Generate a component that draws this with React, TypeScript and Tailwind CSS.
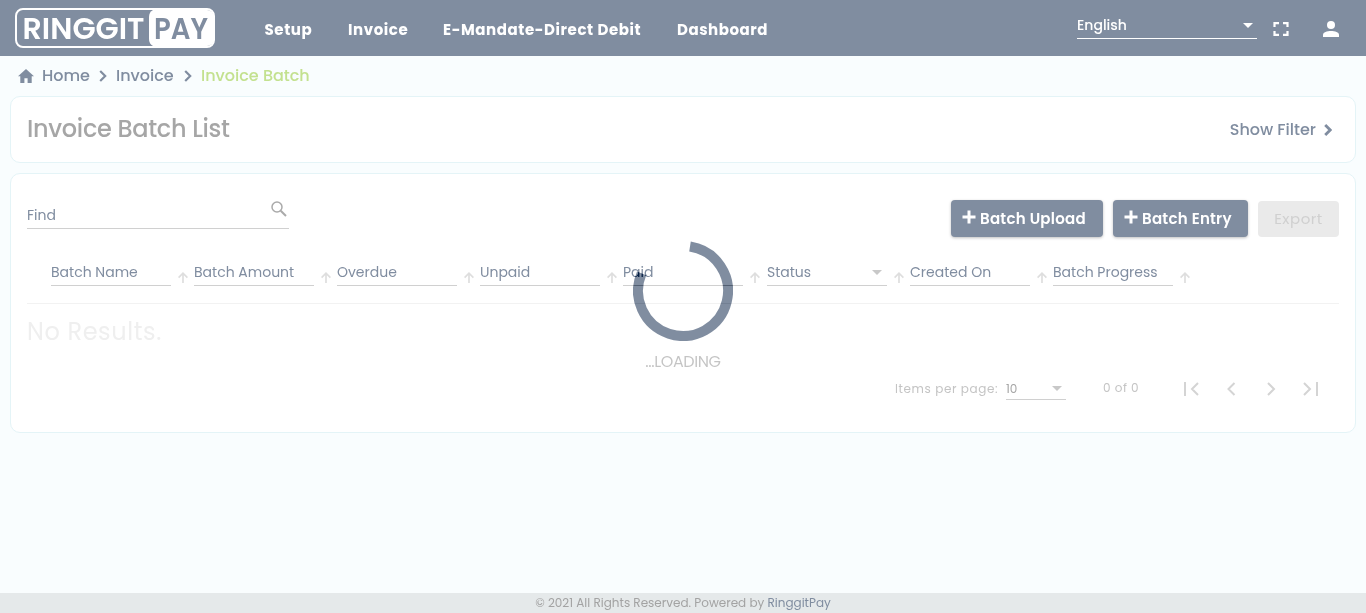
import React from "react";

const columns = [
  { label: "Batch Name" },
  { label: "Batch Amount" },
  { label: "Overdue" },
  { label: "Unpaid" },
  { label: "Paid", wide: true },
  { label: "Status", select: true },
  { label: "Created On" },
  { label: "Batch Progress" },
];

function Logo() {
  return (
    <svg width="200" height="40" viewBox="0 0 200 40" className="shrink-0">
      <rect x="1" y="1" width="198" height="38" rx="7" fill="none" stroke="#fff" strokeWidth="2" />
      <path d="M138 2H192a7 7 0 0 1 7 7V31a7 7 0 0 1-7 7H138Q134 36 134 31V9Q134 4 138 2Z" fill="#fff" />
      <text x="7.500" y="30.500" textLength="122" lengthAdjust="spacingAndGlyphs" fontFamily="Poppins, Lato, sans-serif" fontWeight="600" fontSize="30" fill="#fff">RINGGIT</text>
      <text x="139" y="30.500" textLength="54" lengthAdjust="spacingAndGlyphs" fontFamily="Poppins, Lato, sans-serif" fontWeight="600" fontSize="30" fill="#808da0">PAY</text>
    </svg>
  );
}

function Chevron({ className, w = 2.2 }: { className: string; w?: number }) {
  return (
    <svg viewBox="0 0 8 12" className={className} fill="none" stroke="currentColor" strokeWidth={w}>
      <path d="M1.2 1L6.2 6L1.2 11" />
    </svg>
  );
}

function Caret({ className }: { className: string }) {
  return (
    <svg width="10" height="5" viewBox="0 0 10 5" className={className} fill="currentColor">
      <path d="M0 0H10L5 5Z" />
    </svg>
  );
}

function Plus() {
  return (
    <svg width="14" height="14" viewBox="0 0 14 14" className="mb-1 shrink-0" stroke="#fff" strokeWidth="3">
      <path d="M7 0.5V13.5M0.5 7H13.5" />
    </svg>
  );
}

export default function App() {
  return (
    <div className="relative flex h-[613px] w-full flex-col overflow-hidden bg-[#f9fdfe] font-['Poppins','Inter',sans-serif] text-[#808da0]">
      <header className="flex h-14 shrink-0 items-center bg-[#808da0] pl-[15px] text-white">
        <Logo />
        <nav className="ml-[49.500px] flex pt-[4px] text-[15px] font-bold whitespace-nowrap">
          <a className="w-[83.500px] tracking-[0.580px]">Setup</a>
          <a className="w-[95px] tracking-[0.580px]">Invoice</a>
          <a className="w-[234px] tracking-[0.580px]">E-Mandate-Direct Debit</a>
          <a className="tracking-[0.550px]">Dashboard</a>
        </nav>
        <div className="mr-4 mb-[2px] ml-auto flex h-[23px] w-[180px] justify-between border-b border-white pr-1 text-[14px] font-medium">
          <span className="leading-[18px]">English</span>
          <Caret className="mt-[7px]" />
        </div>
        <svg width="16" height="14" viewBox="0 0 16 14" className="mt-0.5 shrink-0" fill="none" stroke="#fff" strokeWidth="2.2">
          <path d="M1.5 5V1.1H6M10 1.1h4.500V5M14.500 9v3.900H10M6 12.900H1.500V9" />
        </svg>
        <svg width="16" height="16" viewBox="0 0 16 16" className="mt-[2px] mr-[27px] ml-[34px] shrink-0" fill="#fff">
          <circle cx="8" cy="4" r="4" />
          <path d="M0 16v-2.200C0 11.200 4 10 8 10s8 1.200 8 3.800V16Z" />
        </svg>
      </header>

      <div className="flex h-10 shrink-0 items-center pl-[18px] text-[16px] font-medium whitespace-nowrap">
        <svg width="16" height="14" viewBox="0 0 16 14" className="mr-2" fill="currentColor">
          <path d="M8 0L16 7.200H13.700V14H9.600V9.300H6.400V14H2.300V7.200H0Z" />
        </svg>
        <span className="w-[57px]">Home</span>
        <Chevron className="h-3 w-2" />
        <span className="ml-[9px] w-[68px]">Invoice</span>
        <Chevron className="h-3 w-2" />
        <span className="ml-[9px] text-[#c3e18f]">Invoice Batch</span>
      </div>

      <section className="mx-[10px] flex h-[67px] shrink-0 items-center justify-between rounded-[10px] border border-[#e4f4f7] bg-white pr-[23px] pl-4">
        <h1 className="pb-px text-[24px] font-medium tracking-[-0.3px] text-[#a6a6a6]">Invoice Batch List</h1>
        <div className="flex items-center text-[16px] font-medium">
          Show Filter
          <Chevron className="ml-2 h-3 w-2" w={2.8} />
        </div>
      </section>

      <section className="mx-[10px] mt-[10px] flex h-[260px] shrink-0 flex-col rounded-[10px] border border-[#e4f4f7] bg-white px-4">
        <div className="flex h-[84px] shrink-0 items-start pt-[26px]">
          <div className="flex h-[29px] w-[262px] justify-between border-b border-[#d0d0d0] text-[14px]">
            <span className="pt-[5px] leading-5">Find</span>
            <svg width="16" height="16" viewBox="0 0 16 16" className="mt-px mr-[2px]" fill="none" stroke="#aaa" strokeWidth="1.500">
              <circle cx="6" cy="6" r="5" />
              <path d="M9.700 9.700L15 15" strokeWidth="2" />
            </svg>
          </div>
          <div className="ml-auto flex text-[15px] font-semibold whitespace-nowrap">
            <button className="flex h-[37px] w-[152px] items-center rounded bg-[#808da0] pl-[11px] text-white shadow-[0_1px_3px_rgba(0,0,0,0.25)]">
              <Plus />
              <span className="ml-[4px] pt-[2px] tracking-[0.250px]">Batch Upload</span>
            </button>
            <button className="ml-[10px] flex h-[37px] w-[135px] items-center rounded bg-[#808da0] pl-[11px] text-white shadow-[0_1px_3px_rgba(0,0,0,0.25)]">
              <Plus />
              <span className="ml-[4px] pt-[2px] tracking-[0.250px]">Batch Entry</span>
            </button>
            <button className="mt-px ml-[10px] h-9 w-[81px] rounded bg-[#eaeaea] font-normal tracking-[0.5px] text-[#d0d0d0]">Export</button>
          </div>
        </div>

        <div className="flex h-[46px] shrink-0 border-b border-[#f2f2f2] pl-6">
          {columns.map((c) => (
            <div key={c.label} className={c.wide ? "flex w-36 shrink-0" : "flex w-[143px] shrink-0"}>
              <div className="flex h-7 w-[120px] shrink-0 justify-between border-b border-[#d0d0d0] pr-[5px] text-[14px] whitespace-nowrap">
                <span className="pt-1 leading-5">{c.label}</span>
                {c.select && <Caret className="mt-3 text-[#c8c8c8]" />}
              </div>
              <svg width="10" height="11" viewBox="0 0 10 11" className="mt-[14px] ml-[7px] shrink-0" fill="none" stroke="#dedede" strokeWidth="1.700">
                <path d="M5 11V1.200M0.600 5.600L5 1.200L9.400 5.600" />
              </svg>
            </div>
          ))}
        </div>

        <div className="h-[64px] shrink-0 pt-[11px] text-[24px] leading-[34px] tracking-[0.600px] text-[#efefef]">No Results.</div>

        <div className="flex h-10 items-center justify-end pr-[21px] text-[12px] text-[#c4c4c4]">
          <span className="mt-0.5 w-[111px] tracking-[0.600px]">Items per page:</span>
          <div className="mt-[2px] flex h-[22px] w-[60px] items-center justify-between border-b border-[#d0d0d0] pr-1 text-[#a6a6a6]">
            <span>10</span>
            <Caret className="text-[#c8c8c8]" />
          </div>
          <span className="mr-[45px] ml-[37px] w-9 tracking-[0.500px] whitespace-nowrap">0 of 0</span>
          <svg width="134" height="14" viewBox="0 0 134 14" className="mt-0.5" fill="none" stroke="#d4d4d4" strokeWidth="2">
            <path d="M1 0V14M14 1L8 7L14 13M50.500 1L44.500 7L50.500 13M84 1L90 7L84 13M120 1L126 7L120 13M133 0V14" />
          </svg>
        </div>
      </section>

      <footer className="mt-auto flex h-5 shrink-0 items-center justify-center bg-[#e5e9ea] text-[12px] whitespace-nowrap text-[#a3a3a3]">
        <span>© 2021 All Rights Reserved. Powered by <span className="text-[#808da0]">RinggitPay</span></span>
      </footer>

      {/* Difference blending on the white page yields #808da0 and darkens text beneath the ring */}
      <div className="absolute top-[241px] left-[633px] flex w-[100px] flex-col items-center mix-blend-difference">
        <svg width="100" height="100" viewBox="0 0 100 100" fill="none" stroke="#7f725f" strokeWidth="10">
          <path d="M57 5.500A45 45 0 1 1 8.600 32.400" />
        </svg>
        <span className="mt-[10px] text-[16px] leading-[22px] tracking-[-0.4px] text-[#3b3b3b]">...LOADING</span>
      </div>
    </div>
  );
}
